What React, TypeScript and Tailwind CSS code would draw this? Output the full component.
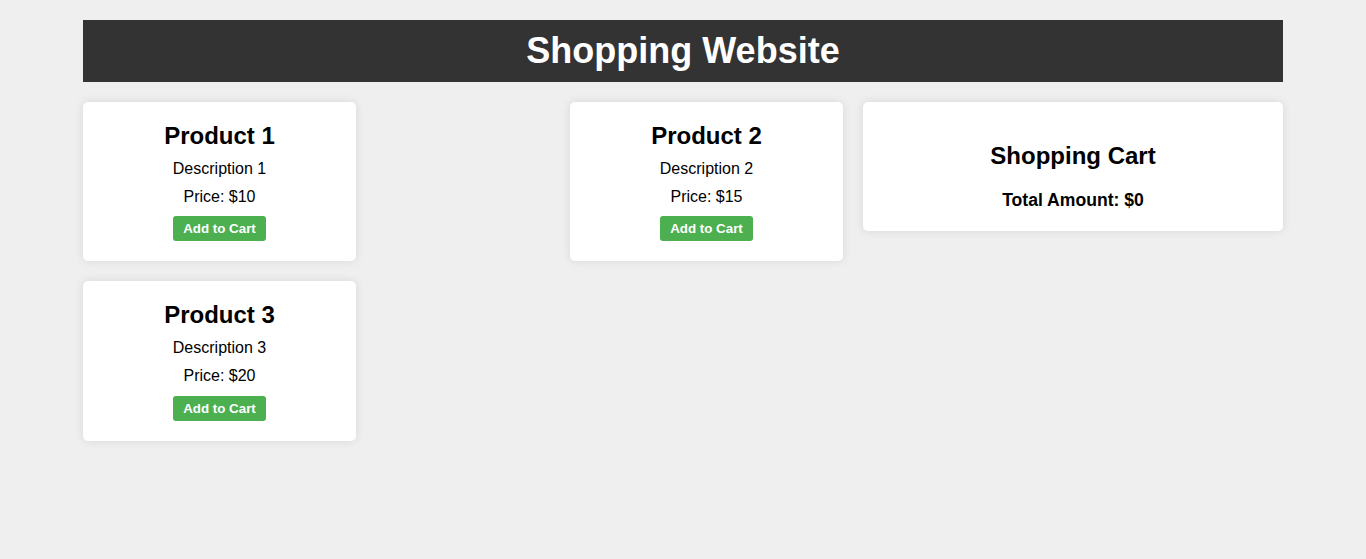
const products = [
  { name: "Product 1", description: "Description 1", price: 10 },
  { name: "Product 2", description: "Description 2", price: 15 },
  { name: "Product 3", description: "Description 3", price: 20 },
];

function ProductCard({ name, description, price }: { name: string; description: string; price: number }) {
  return (
    <div className="w-[273px] bg-white rounded-[5px] shadow-[0_0_10px_rgba(0,0,0,0.1)] p-5 flex flex-col items-center text-center">
      <h2 className="text-[24px] font-bold leading-[27.6px] mb-[10px]">{name}</h2>
      <p className="text-[16px] leading-[18.4px] mb-[10px]">{description}</p>
      <p className="text-[16px] leading-[18.4px] mb-[10px]">Price: ${price}</p>
      <button className="bg-[#4caf50] text-white font-bold text-[13.33px] leading-[17px] px-[10px] py-1 rounded-[3px]">
        Add to Cart
      </button>
    </div>
  );
}

export default function App() {
  const total = 0;
  return (
    <div className="min-h-screen bg-[#efefef] text-black font-['Liberation_Sans',Arial,sans-serif] pt-5">
      <div className="w-[1200px] mx-auto">
        <header className="h-[62px] bg-[#333333] text-white flex items-center justify-center">
          <h1 className="text-[36px] font-bold leading-[41.4px]">Shopping Website</h1>
        </header>
        <div className="flex items-start gap-5 mt-5">
          <div className="w-[760px] flex flex-wrap justify-between gap-y-5">
            {products.map((p) => (
              <ProductCard key={p.name} {...p} />
            ))}
          </div>
          <div className="w-[420px] bg-white rounded-[5px] shadow-[0_0_10px_rgba(0,0,0,0.1)] p-5 text-center">
            <h2 className="text-[24px] font-bold leading-[27.6px] my-5">Shopping Cart</h2>
            <p className="text-[17.6px] font-bold leading-[20.2px] mb-[1px]">Total Amount: ${total}</p>
          </div>
        </div>
      </div>
    </div>
  );
}
